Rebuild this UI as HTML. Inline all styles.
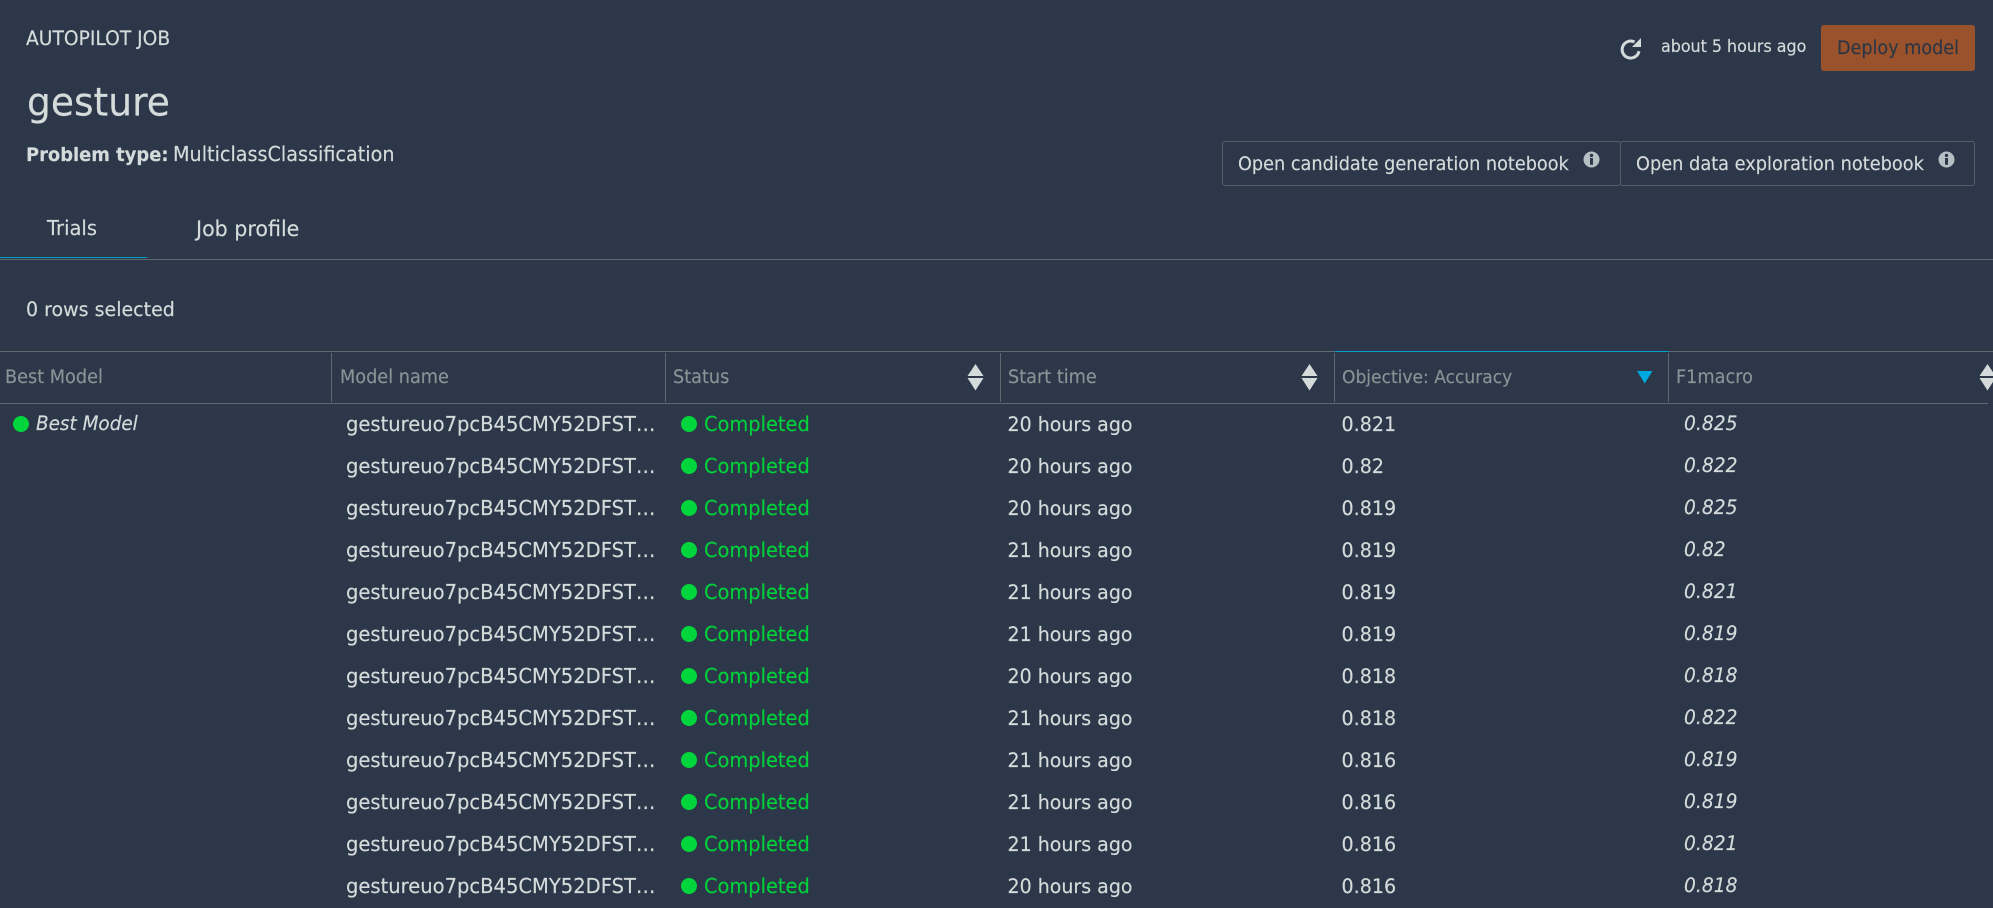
<!DOCTYPE html>
<html lang="en">
<head>
<meta charset="utf-8">
<title>gesture - Autopilot job</title>
<style>
html,body{margin:0;padding:0;background:#2c3849;}
body{position:relative;width:1993px;height:908px;overflow:hidden;font-family:"DejaVu Sans","Liberation Sans",sans-serif;color:#d5dbdb;}
.t{position:absolute;line-height:24px;white-space:nowrap;transform:scaleY(1.04);transform-origin:50% 75%;-webkit-text-stroke:.15px currentColor;}
.box{position:absolute;box-sizing:border-box;}
.line{position:absolute;background:#5f6770;}
.h{top:366px;font-size:17.7px;color:#879596;}
.row{position:absolute;left:0;width:1993px;height:24px;}
.row .t{top:1px;}
.n{left:346px;font-size:19.55px;}
.dot{position:absolute;top:4px;width:16px;height:16px;border-radius:50%;background:#00d63c;}
.c{left:704px;font-size:19.4px;color:#00d13a;}
.s{left:1007.5px;font-size:19px;}
.a{left:1341.5px;font-size:19.1px;}
.f{left:1684px;font-size:18.7px;font-style:italic;}
svg{position:absolute;display:block;}
</style>
</head>
<body>
<div class="t" style="left:26px;top:28px;font-size:18.7px;">AUTOPILOT JOB</div>
<div class="t" style="left:27px;top:90px;font-size:37.6px;">gesture</div>
<div class="t" style="left:26px;top:144px;font-size:17.9px;font-weight:bold;">Problem type:</div>
<div class="t" style="left:173px;top:143px;font-size:19.2px;">MulticlassClassification</div>

<svg style="left:1620px;top:38px" width="22" height="22" viewBox="0 0 22 22">
  <path d="M19 13.2A8.5 8.5 0 1 1 14.5 4" fill="none" stroke="#d5dbdb" stroke-width="3"/>
  <path d="M21 0V9H12Z" fill="#d5dbdb"/>
</svg>
<div class="t" style="left:1661px;top:35px;font-size:15.9px;">about 5 hours ago</div>
<div class="box" style="left:1821px;top:25px;width:154px;height:46px;background:#9a522c;border-radius:3px;"></div>
<div class="t" style="left:1837px;top:37px;font-size:17.6px;color:#2c3544;">Deploy model</div>

<div class="box" style="left:1222px;top:141px;width:399px;height:45px;border:1px solid #555d68;border-radius:3px;"></div>
<div class="box" style="left:1620px;top:141px;width:355px;height:45px;border:1px solid #555d68;border-radius:3px;"></div>
<div class="t" style="left:1238px;top:153px;font-size:17.68px;">Open candidate generation notebook</div>
<div class="t" style="left:1636px;top:153px;font-size:17.75px;">Open data exploration notebook</div>
<svg style="left:1583px;top:151px" width="17" height="17" viewBox="0 0 17 17">
  <circle cx="8.5" cy="8.5" r="8" fill="#b5bfc4"/><circle cx="8.5" cy="4.4" r="1.7" fill="#2c3849"/><rect x="7" y="7" width="3" height="6.8" fill="#2c3849"/>
</svg>
<svg style="left:1938px;top:151px" width="17" height="17" viewBox="0 0 17 17">
  <circle cx="8.5" cy="8.5" r="8" fill="#b5bfc4"/><circle cx="8.5" cy="4.4" r="1.7" fill="#2c3849"/><rect x="7" y="7" width="3" height="6.8" fill="#2c3849"/>
</svg>

<div class="t" style="left:47px;top:217px;font-size:19.5px;">Trials</div>
<div class="t" style="left:196px;top:217px;font-size:20.6px;">Job profile</div>
<div class="line" style="left:0;top:259px;width:1993px;height:1px;"></div>
<div class="line" style="left:0;top:257px;width:147px;height:1px;background:#00a1c9;"></div>
<div class="t" style="left:26px;top:298px;font-size:19px;">0 rows selected</div>

<div class="line" style="left:0;top:351px;width:1993px;height:1px;"></div>
<div class="line" style="left:1335px;top:351px;width:334px;height:1px;background:#00a1c9;"></div>
<div class="line" style="left:0;top:403px;width:1988px;height:1px;"></div>
<div class="line" style="left:331px;top:353px;width:1px;height:49px;"></div>
<div class="line" style="left:665px;top:353px;width:1px;height:49px;"></div>
<div class="line" style="left:1000px;top:353px;width:1px;height:49px;"></div>
<div class="line" style="left:1334px;top:353px;width:1px;height:49px;"></div>
<div class="line" style="left:1668px;top:353px;width:1px;height:49px;"></div>

<div class="t h" style="left:5px;">Best Model</div>
<div class="t h" style="left:340px;">Model name</div>
<div class="t h" style="left:673px;">Status</div>
<div class="t h" style="left:1008px;">Start time</div>
<div class="t h" style="left:1342px;font-size:17.1px;">Objective: Accuracy</div>
<div class="t h" style="left:1676px;">F1macro</div>

<svg style="left:967px;top:364px" width="17" height="27" viewBox="0 0 17 27"><path d="M8.5 0L16.5 12H.5ZM.5 14H16.5L8.5 26.5Z" fill="#d5dbdb"/></svg>
<svg style="left:1301px;top:364px" width="17" height="27" viewBox="0 0 17 27"><path d="M8.5 0L16.5 12H.5ZM.5 14H16.5L8.5 26.5Z" fill="#d5dbdb"/></svg>
<svg style="left:1637px;top:371px" width="16" height="13" viewBox="0 0 16 13"><path d="M0 0H15.5L7.75 12.5Z" fill="#00a8e1"/></svg>
<svg style="left:1979px;top:364px" width="17" height="27" viewBox="0 0 17 27"><path d="M8.5 0L16.5 12H.5ZM.5 14H16.5L8.5 26.5Z" fill="#d5dbdb"/></svg>

<div class="row" style="top:412px"><span class="dot" style="left:13px"></span><span class="t" style="left:36px;font-size:18.4px;font-style:italic;">Best Model</span><span class="t n">gestureuo7pcB45CMY52DFST…</span><span class="dot" style="left:681px"></span><span class="t c">Completed</span><span class="t s">20 hours ago</span><span class="t a">0.821</span><span class="t f">0.825</span></div>
<div class="row" style="top:454px"><span class="t n">gestureuo7pcB45CMY52DFST…</span><span class="dot" style="left:681px"></span><span class="t c">Completed</span><span class="t s">20 hours ago</span><span class="t a">0.82</span><span class="t f">0.822</span></div>
<div class="row" style="top:496px"><span class="t n">gestureuo7pcB45CMY52DFST…</span><span class="dot" style="left:681px"></span><span class="t c">Completed</span><span class="t s">20 hours ago</span><span class="t a">0.819</span><span class="t f">0.825</span></div>
<div class="row" style="top:538px"><span class="t n">gestureuo7pcB45CMY52DFST…</span><span class="dot" style="left:681px"></span><span class="t c">Completed</span><span class="t s">21 hours ago</span><span class="t a">0.819</span><span class="t f">0.82</span></div>
<div class="row" style="top:580px"><span class="t n">gestureuo7pcB45CMY52DFST…</span><span class="dot" style="left:681px"></span><span class="t c">Completed</span><span class="t s">21 hours ago</span><span class="t a">0.819</span><span class="t f">0.821</span></div>
<div class="row" style="top:622px"><span class="t n">gestureuo7pcB45CMY52DFST…</span><span class="dot" style="left:681px"></span><span class="t c">Completed</span><span class="t s">21 hours ago</span><span class="t a">0.819</span><span class="t f">0.819</span></div>
<div class="row" style="top:664px"><span class="t n">gestureuo7pcB45CMY52DFST…</span><span class="dot" style="left:681px"></span><span class="t c">Completed</span><span class="t s">20 hours ago</span><span class="t a">0.818</span><span class="t f">0.818</span></div>
<div class="row" style="top:706px"><span class="t n">gestureuo7pcB45CMY52DFST…</span><span class="dot" style="left:681px"></span><span class="t c">Completed</span><span class="t s">21 hours ago</span><span class="t a">0.818</span><span class="t f">0.822</span></div>
<div class="row" style="top:748px"><span class="t n">gestureuo7pcB45CMY52DFST…</span><span class="dot" style="left:681px"></span><span class="t c">Completed</span><span class="t s">21 hours ago</span><span class="t a">0.816</span><span class="t f">0.819</span></div>
<div class="row" style="top:790px"><span class="t n">gestureuo7pcB45CMY52DFST…</span><span class="dot" style="left:681px"></span><span class="t c">Completed</span><span class="t s">21 hours ago</span><span class="t a">0.816</span><span class="t f">0.819</span></div>
<div class="row" style="top:832px"><span class="t n">gestureuo7pcB45CMY52DFST…</span><span class="dot" style="left:681px"></span><span class="t c">Completed</span><span class="t s">21 hours ago</span><span class="t a">0.816</span><span class="t f">0.821</span></div>
<div class="row" style="top:874px"><span class="t n">gestureuo7pcB45CMY52DFST…</span><span class="dot" style="left:681px"></span><span class="t c">Completed</span><span class="t s">20 hours ago</span><span class="t a">0.816</span><span class="t f">0.818</span></div>
</body>
</html>
